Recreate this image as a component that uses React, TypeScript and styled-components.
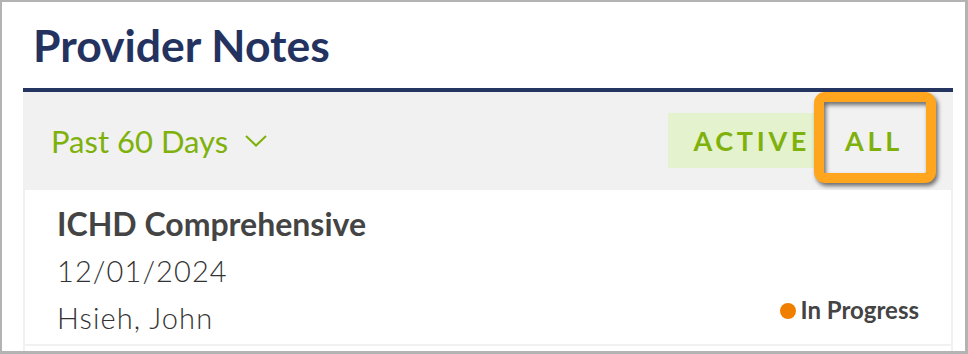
import React from "react";
import styled, { createGlobalStyle } from "styled-components";

const Global = createGlobalStyle`
  html, body { margin: 0; padding: 0; background: #ffffff; }
  body { font-family: Lato, "Open Sans", sans-serif; }
  * { box-sizing: border-box; }
`;

const Frame = styled.div`
  width: 968px;
  height: 354px;
  border: 2px solid #b3b3b3;
  border-right-width: 3px;
  border-bottom-width: 3px;
  background: #ffffff;
  padding: 0 12px 0 21px;
  overflow: hidden;
`;

const Title = styled.h1`
  margin: 16px 0 16.5px 10px;
  font-family: Lato, sans-serif;
  font-weight: 700;
  font-size: 44.5px;
  line-height: 1.2;
  color: #24325f;
`;

const Panel = styled.section`
  border-top: 4px solid #253562;
  background: #f1f1f1;
  padding: 0 2px;
`;

const Toolbar = styled.div`
  height: 98px;
  display: flex;
  align-items: center;
  justify-content: space-between;
  padding: 0 24px 0 26px;
`;

const RangeSelect = styled.button`
  display: flex;
  align-items: center;
  gap: 17px;
  border: 0;
  background: transparent;
  padding: 0;
  font-family: Lato, sans-serif;
  font-size: 31px;
  font-weight: 400;
  color: #7fb10c;
  cursor: pointer;
`;

const Tabs = styled.div`
  display: flex;
  align-items: stretch;
  height: 55px;
`;

const Tab = styled.button<{ $active?: boolean }>`
  position: relative;
  border: 0;
  background: ${(p) => (p.$active ? "#e4f2cd" : "transparent")};
  padding: ${(p) => (p.$active ? "0 7px 0 25px" : "0 24px 0 28px")};
  font-family: Lato, sans-serif;
  font-weight: 700;
  font-size: 27px;
  letter-spacing: 3.7px;
  color: #7fb10c;
  cursor: pointer;
`;

const Highlight = styled.span`
  position: absolute;
  left: -3px;
  top: -21px;
  width: 122px;
  height: 91px;
  border: 10px solid #ffa51e;
  border-radius: 11px;
  filter: drop-shadow(2px 3px 2px rgba(0, 0, 0, 0.55));
  pointer-events: none;
`;

const List = styled.div`
  display: flex;
  flex-direction: column;
  gap: 2px;
`;

const Card = styled.article`
  background: #ffffff;
  height: 154px;
  padding: 10px 32px 3px 32px;
  display: flex;
  justify-content: space-between;
`;

const Info = styled.div`
  display: flex;
  flex-direction: column;
`;

const NoteName = styled.div`
  font-family: Lato, sans-serif;
  font-weight: 700;
  font-size: 32px;
  line-height: 47px;
  color: #444444;
`;

const Meta = styled.div`
  font-family: Lato, sans-serif;
  font-weight: 300;
  font-size: 29px;
  letter-spacing: 1.1px;
  line-height: 47px;
  color: #333333;
`;

const Status = styled.div`
  align-self: flex-end;
  margin-bottom: 16px;
  display: flex;
  align-items: center;
  gap: 5px;
  font-family: Lato, sans-serif;
  font-weight: 700;
  font-size: 24px;
  line-height: 1.2;
  color: #444444;
`;

const Dot = styled.span<{ $color: string }>`
  width: 16px;
  height: 16px;
  border-radius: 50%;
  background: ${(p) => p.$color};
  margin-top: 2px;
`;

const Chevron = () => (
  <svg width="22" height="12" viewBox="0 0 22 12" fill="none">
    <polyline points="1,1 11,10.5 21,1" stroke="#7fb10c" strokeWidth="2" />
  </svg>
);

export default function App() {
  return (
    <>
      <Global />
      <Frame>
        <Title>Provider Notes</Title>
        <Panel>
          <Toolbar>
            <RangeSelect>
              Past 60 Days
              <Chevron />
            </RangeSelect>
            <Tabs>
              <Tab $active>ACTIVE</Tab>
              <Tab>
                ALL
                <Highlight />
              </Tab>
            </Tabs>
          </Toolbar>
          <List>
            <Card>
              <Info>
                <NoteName>ICHD Comprehensive</NoteName>
                <Meta>12/01/2024</Meta>
                <Meta>Hsieh, John</Meta>
              </Info>
              <Status>
                <Dot $color="#f07f00" />
                In Progress
              </Status>
            </Card>
            <Card />
          </List>
        </Panel>
      </Frame>
    </>
  );
}
